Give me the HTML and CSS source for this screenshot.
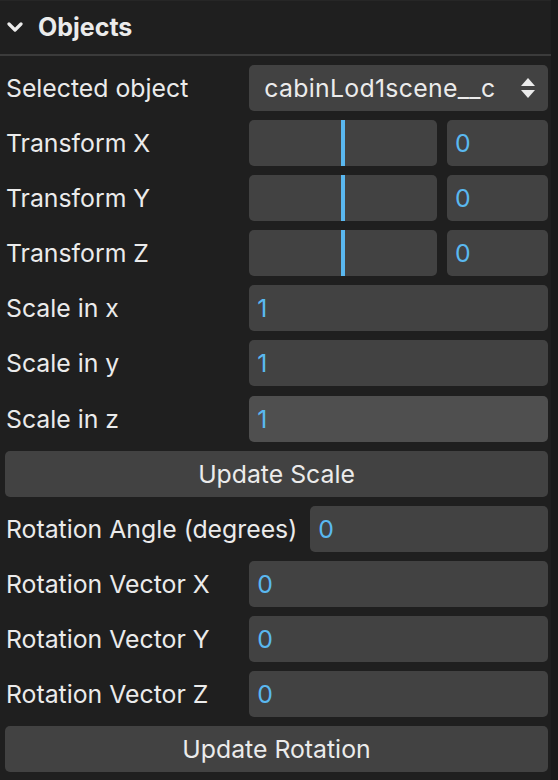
FILE: index.html
```html
<!DOCTYPE html>
<html>
<head>
<meta charset="utf-8">
<link rel="stylesheet" href="styles.css">
</head>
<body>
<div class="gui">
  <div class="title">
    <svg class="chev" width="16" height="11" viewBox="0 0 16 11"><polyline points="2,2 8,8 14,2" fill="none" stroke="#ebebeb" stroke-width="3.2" stroke-linecap="round" stroke-linejoin="round"/></svg>
    <span>Objects</span>
  </div>
  <div class="children">
    <div class="ctrl">
      <div class="name">Selected object</div>
      <div class="widget select">
        <span class="sel-text">cabinLod1scene__c</span>
        <svg class="updown" width="14" height="21" viewBox="0 0 14 21"><polygon points="7,0 14,8 0,8" fill="#ebebeb"/><polygon points="0,12 14,12 7,20" fill="#ebebeb"/></svg>
      </div>
    </div>
    <div class="ctrl">
      <div class="name">Transform X</div>
      <div class="slider"><div class="fill" style="width: calc(50% - 2px)"></div></div>
      <div class="widget num small">0</div>
    </div>
    <div class="ctrl">
      <div class="name">Transform Y</div>
      <div class="slider"><div class="fill" style="width: calc(50% - 2px)"></div></div>
      <div class="widget num small">0</div>
    </div>
    <div class="ctrl">
      <div class="name">Transform Z</div>
      <div class="slider"><div class="fill" style="width: calc(50% - 2px)"></div></div>
      <div class="widget num small">0</div>
    </div>
    <div class="ctrl">
      <div class="name">Scale in x</div>
      <div class="widget num">1</div>
    </div>
    <div class="ctrl">
      <div class="name">Scale in y</div>
      <div class="widget num">1</div>
    </div>
    <div class="ctrl">
      <div class="name">Scale in z</div>
      <div class="widget num hover">1</div>
    </div>
    <div class="ctrl">
      <div class="button">Update Scale</div>
    </div>
    <div class="ctrl">
      <div class="name">Rotation Angle (degrees)</div>
      <div class="widget num">0</div>
    </div>
    <div class="ctrl">
      <div class="name">Rotation Vector X</div>
      <div class="widget num">0</div>
    </div>
    <div class="ctrl">
      <div class="name">Rotation Vector Y</div>
      <div class="widget num">0</div>
    </div>
    <div class="ctrl">
      <div class="name">Rotation Vector Z</div>
      <div class="widget num">0</div>
    </div>
    <div class="ctrl">
      <div class="button">Update Rotation</div>
    </div>
  </div>
</div>
</body>
</html>
```

FILE: styles.css
```css
html, body {
  margin: 0;
  padding: 0;
  background: #1a1a1a;
  height: 100%;
  overflow: hidden;
}
.gui {
  width: 551px;
  height: 780px;
  background: #1f1f1f;
  color: #ebebeb;
  font-family: Inter, "Noto Sans", "Liberation Sans", sans-serif;
  font-size: 24.8px;
  box-sizing: border-box;
}
.title {
  height: 56px;
  box-sizing: border-box;
  border-top: 1px solid #262626;
  border-bottom: 2px solid #3b3b3b;
  display: flex;
  align-items: center;
  padding-left: 7px;
  gap: 15px;
  font-weight: 700;
  font-size: 25px;
  padding-bottom: 1px;
}
.chev { flex-shrink: 0; margin-top: 1px; }
.children {
  padding: 9px 3px 0 5px;
  display: flex;
  flex-direction: column;
  gap: 9.1px;
}
.ctrl {
  display: flex;
  height: 46px;
  align-items: stretch;
}
.name {
  min-width: 45%;
  flex-shrink: 0;
  white-space: pre;
  padding-right: 13px;
  box-sizing: border-box;
  line-height: 46px;
  padding-left: 1px;
}
.widget {
  flex: 1;
  background: #424242;
  border-radius: 5px;
  display: flex;
  align-items: center;
  box-sizing: border-box;
  min-width: 0;
}
.widget.hover { background: #4f4f4f; }
.num {
  color: #5ab8f0;
  padding-left: 8px;
}
.num.small {
  flex: 0 0 101px;
}
.select {
  padding-left: 15px;
  padding-right: 13px;
  justify-content: space-between;
}
.sel-text { letter-spacing: 0.3px; }
.updown { flex-shrink: 0; margin-top: 1px; }
.slider {
  flex: 1;
  background: #424242;
  border-radius: 5px;
  margin-right: 10px;
  overflow: hidden;
}
.fill {
  height: 100%;
  border-right: 4px solid #5ab8f0;
  box-sizing: content-box;
}
.button {
  flex: 1;
  background: #424242;
  border-radius: 5px;
  display: flex;
  align-items: center;
  justify-content: center;
}
```
